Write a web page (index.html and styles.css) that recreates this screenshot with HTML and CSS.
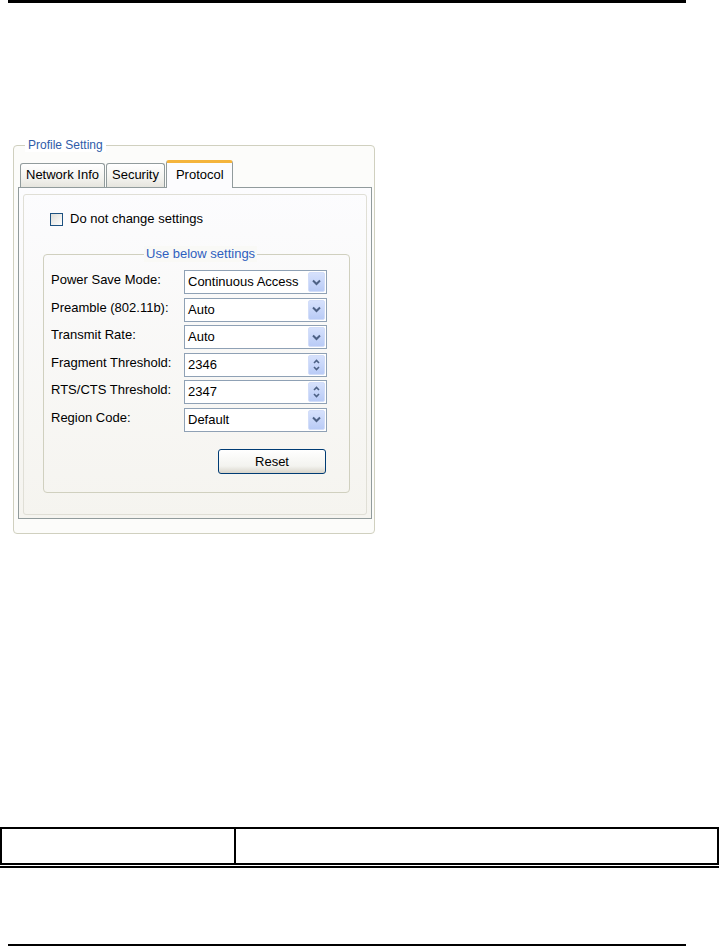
FILE: index.html
```html
<!DOCTYPE html>
<html>
<head>
<meta charset="utf-8">
<link rel="stylesheet" href="styles.css">
</head>
<body>
<div class="page">
  <div class="rule top"></div>

  <section class="profile">
    <div class="profile-legend">Profile Setting</div>
    <div class="tabs">
      <div class="tab">Network Info</div>
      <div class="tab">Security</div>
      <div class="tab active">Protocol</div>
    </div>
    <div class="pane">
      <div class="pane-inner">
        <div class="check"><span class="box"></span><span>Do not change settings</span></div>
        <div class="group">
          <div class="group-legend">Use below settings</div>
          <div class="rows">
            <div class="row"><span class="lbl">Power Save Mode:</span>
              <div class="field"><span class="val">Continuous Access</span><span class="btn-drop"><svg width="9" height="7" viewBox="0 0 9 7"><path d="M1 1.5 L4.5 5 L8 1.5" stroke="#4d6185" stroke-width="2" fill="none"/></svg></span></div></div>
            <div class="row"><span class="lbl">Preamble (802.11b):</span>
              <div class="field"><span class="val">Auto</span><span class="btn-drop"><svg width="9" height="7" viewBox="0 0 9 7"><path d="M1 1.5 L4.5 5 L8 1.5" stroke="#4d6185" stroke-width="2" fill="none"/></svg></span></div></div>
            <div class="row"><span class="lbl">Transmit Rate:</span>
              <div class="field"><span class="val">Auto</span><span class="btn-drop"><svg width="9" height="7" viewBox="0 0 9 7"><path d="M1 1.5 L4.5 5 L8 1.5" stroke="#4d6185" stroke-width="2" fill="none"/></svg></span></div></div>
            <div class="row"><span class="lbl">Fragment Threshold:</span>
              <div class="field"><span class="val">2346</span><span class="btn-spin"><svg width="7" height="5" viewBox="0 0 7 5"><path d="M1 4 L3.5 1.5 L6 4" stroke="#4d6185" stroke-width="1.6" fill="none"/></svg><svg width="7" height="5" viewBox="0 0 7 5"><path d="M1 1 L3.5 3.5 L6 1" stroke="#4d6185" stroke-width="1.6" fill="none"/></svg></span></div></div>
            <div class="row"><span class="lbl">RTS/CTS Threshold:</span>
              <div class="field"><span class="val">2347</span><span class="btn-spin"><svg width="7" height="5" viewBox="0 0 7 5"><path d="M1 4 L3.5 1.5 L6 4" stroke="#4d6185" stroke-width="1.6" fill="none"/></svg><svg width="7" height="5" viewBox="0 0 7 5"><path d="M1 1 L3.5 3.5 L6 1" stroke="#4d6185" stroke-width="1.6" fill="none"/></svg></span></div></div>
            <div class="row"><span class="lbl">Region Code:</span>
              <div class="field"><span class="val">Default</span><span class="btn-drop"><svg width="9" height="7" viewBox="0 0 9 7"><path d="M1 1.5 L4.5 5 L8 1.5" stroke="#4d6185" stroke-width="2" fill="none"/></svg></span></div></div>
          </div>
          <div class="actions"><button class="btn">Reset</button></div>
        </div>
      </div>
    </div>
  </section>

  <div class="doc-table">
    <div class="cell first"></div>
    <div class="cell"></div>
  </div>
  <div class="double"></div>

  <div class="rule bottom"></div>
</div>
</body>
</html>
```

FILE: styles.css
```css
html, body {
  margin: 0;
  padding: 0;
  background: #ffffff;
}

.page {
  width: 719px;
  height: 946px;
  overflow: hidden;
  font-family: "Liberation Sans", Arial, sans-serif;
  font-size: 13px;
  color: #000;
}

.rule {
  background: #000;
  height: 3px;
  width: 678px;
  margin-left: 8px;
}

.rule.bottom {
  margin-top: 76px;
}

/* Profile Setting group box */
.profile {
  position: relative;
  box-sizing: border-box;
  margin-top: 142px;
  margin-left: 13px;
  width: 362px;
  height: 389px;
  border: 1px solid #d0d0bf;
  border-radius: 4px;
  background: #fcfcfa;
  padding: 14px 2px 0 4px;
}

.profile-legend {
  position: absolute;
  top: -8px;
  left: 11px;
  padding: 0 3px;
  background: #fff;
  font-size: 12px;
  line-height: 14px;
  color: #2f5ca8;
}

.tabs {
  display: flex;
  align-items: flex-end;
  height: 27px;
  padding-left: 2px;
  position: relative;
  z-index: 1;
}

.tab {
  box-sizing: border-box;
  height: 24px;
  padding: 0 5px;
  line-height: 22px;
  border: 1px solid #919b9c;
  border-bottom: none;
  border-radius: 3px 3px 0 0;
  background: linear-gradient(#ffffff, #f3f3ef 60%, #e6e5de);
  margin-right: 1px;
}

.tab.active {
  height: 27px;
  padding: 0 8px 0 9px;
  line-height: 24px;
  border-top: 3px solid #f4b43c;
  background: #fcfcfe;
  margin-bottom: -1px;
  height: 28px;
}

.pane {
  box-sizing: border-box;
  height: 332px;
  border: 1px solid #919b9c;
  background: linear-gradient(#fcfcfe, #f5f4ef);
  padding: 6px 4px 3px 4px;
}

.pane-inner {
  box-sizing: border-box;
  height: 100%;
  border: 1px solid #e0dfd6;
  border-radius: 3px;
  padding: 17px 17px 0 26px;
}

.check {
  display: flex;
  align-items: center;
  gap: 7px;
  height: 14px;
  line-height: 14px;
}

.box {
  box-sizing: border-box;
  width: 13px;
  height: 13px;
  border: 1px solid #1c5180;
  background: linear-gradient(135deg, #dcdcd7, #ffffff);
}

.group {
  position: relative;
  box-sizing: border-box;
  margin-top: 28px;
  margin-left: -7px;
  width: 307px;
  height: 239px;
  border: 1px solid #d0d0bf;
  border-radius: 4px;
  padding: 15px 21px 0 7px;
}

.group-legend {
  position: absolute;
  top: -9px;
  left: 100px;
  padding: 0 2px;
  background: #f9f9f6;
  line-height: 16px;
  color: #2f5fbf;
}

.rows {
  display: flex;
  flex-direction: column;
  gap: 3.5px;
}

.row {
  display: flex;
  align-items: flex-start;
  height: 24px;
}

.lbl {
  width: 133px;
  line-height: 20px;
  white-space: nowrap;
}

.field {
  box-sizing: border-box;
  width: 143px;
  height: 24px;
  border: 1px solid #8fa1b5;
  background: #fff;
  display: flex;
  align-items: center;
  justify-content: space-between;
  padding: 1px 1px 1px 3px;
}

.val {
  line-height: 20px;
}

.btn-drop, .btn-spin {
  box-sizing: border-box;
  width: 17px;
  height: 20px;
  border: 1px solid #d2ddf9;
  border-radius: 2px;
  background: linear-gradient(#d6e1fc, #b9cbf6);
  display: flex;
  align-items: center;
  justify-content: center;
}

.btn-spin {
  flex-direction: column;
  gap: 2px;
}

.btn-spin svg {
  display: block;
}

.actions {
  display: flex;
  justify-content: flex-end;
  margin-top: 17px;
  padding-right: 2px;
}

.btn {
  box-sizing: border-box;
  width: 108px;
  height: 25px;
  border: 1px solid #003c74;
  border-radius: 3px;
  background: linear-gradient(#ffffff, #f3f3ef 70%, #d8d4ca);
  font-family: "Liberation Sans", Arial, sans-serif;
  font-size: 13px;
  color: #000;
  padding: 0;
}

/* bottom document table */
.doc-table {
  box-sizing: border-box;
  margin-top: 293px;
  width: 719px;
  height: 38px;
  border: 2px solid #000;
  display: grid;
  grid-template-columns: 234px 1fr;
}

.cell.first {
  border-right: 2px solid #000;
}

.double {
  margin-top: 1px;
  height: 2px;
  background: #000;
  width: 719px;
}
```
